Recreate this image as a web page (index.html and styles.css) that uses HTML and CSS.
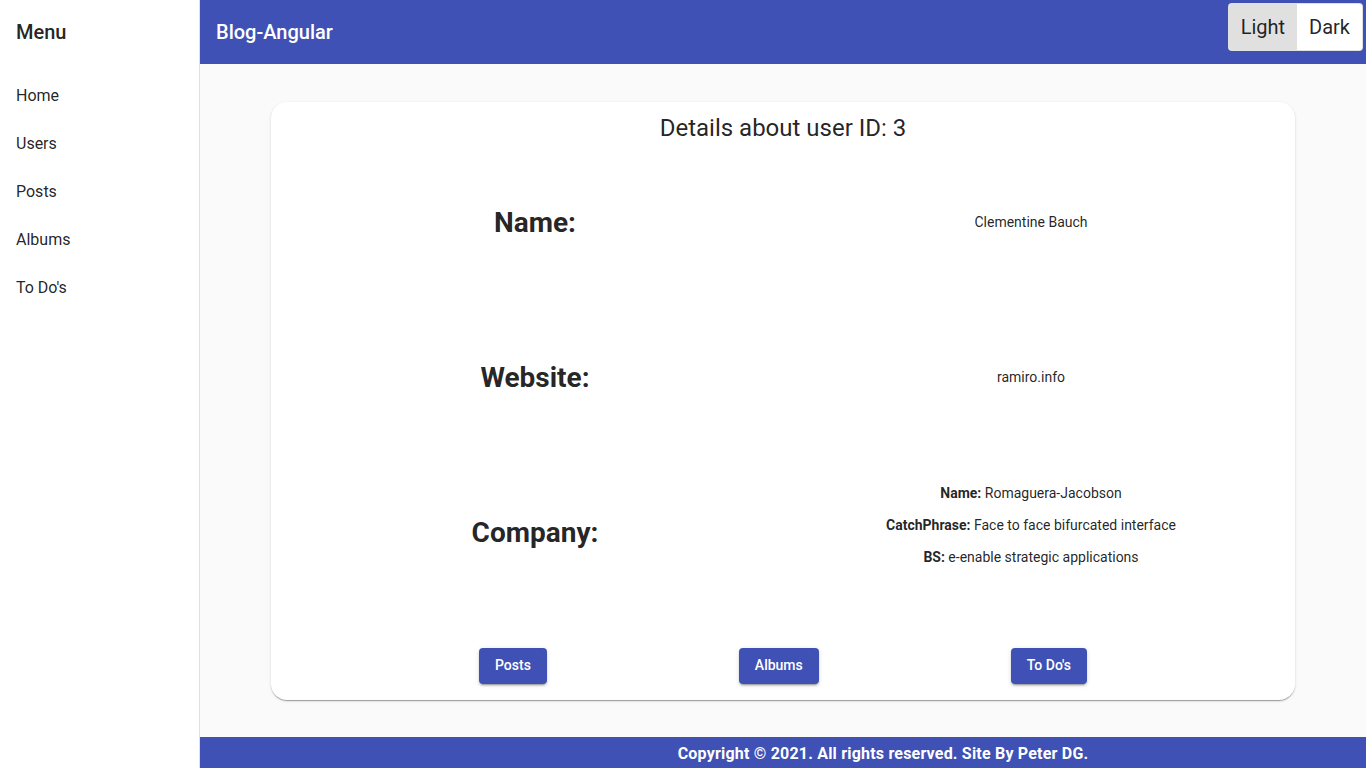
FILE: index.html
```html
<!DOCTYPE html>
<html lang="en">
<head>
<meta charset="utf-8">
<title>Blog-Angular</title>
<link rel="stylesheet" href="styles.css">
</head>
<body>
<div class="shell">
  <nav class="sidenav">
    <div class="sidenav-head">Menu</div>
    <ul class="nav-list">
      <li>Home</li>
      <li>Users</li>
      <li>Posts</li>
      <li>Albums</li>
      <li>To Do's</li>
    </ul>
  </nav>
  <div class="main">
    <header class="toolbar">
      <span class="brand">Blog-Angular</span>
      <div class="toggle-group">
        <span class="toggle checked">Light</span>
        <span class="toggle">Dark</span>
      </div>
    </header>
    <section class="content">
      <div class="card">
        <h1 class="card-title">Details about user ID: 3</h1>
        <div class="details">
          <div class="label">Name:</div>
          <div class="value">Clementine Bauch</div>
          <div class="label">Website:</div>
          <div class="value">ramiro.info</div>
          <div class="label">Company:</div>
          <div class="value company">
            <p><b>Name:</b> Romaguera-Jacobson</p>
            <p><b>CatchPhrase:</b> Face to face bifurcated interface</p>
            <p><b>BS:</b> e-enable strategic applications</p>
          </div>
        </div>
        <div class="actions">
          <button class="btn">Posts</button>
          <button class="btn">Albums</button>
          <button class="btn">To Do's</button>
        </div>
      </div>
    </section>
    <footer class="footer">Copyright © 2021. All rights reserved. Site By <span class="author">Peter DG.</span></footer>
  </div>
</div>
</body>
</html>
```
FILE: styles.css
```css
* { box-sizing: border-box; }
html, body { margin: 0; padding: 0; height: 100%; }
body {
  font-family: Roboto, "Helvetica Neue", sans-serif;
  color: rgba(0,0,0,.87);
  background: #fafafa;
}
.shell { display: flex; height: 768px; }
.sidenav {
  width: 200px;
  flex: 0 0 200px;
  background: #fff;
  border-right: 1px solid #e0e0e0;
}
.sidenav-head {
  height: 64px;
  display: flex;
  align-items: center;
  padding: 0 16px;
  font-size: 20px;
  font-weight: 500;
}
.nav-list { list-style: none; margin: 0; padding: 7px 0 0; }
.nav-list li {
  height: 48px;
  display: flex;
  align-items: center;
  padding: 0 16px;
  font-size: 16px;
  color: rgba(0,0,0,.87);
}
.main { flex: 1; display: flex; flex-direction: column; min-width: 0; }
.toolbar {
  height: 64px;
  flex: 0 0 64px;
  background: #3f51b5;
  color: #fff;
  display: flex;
  align-items: center;
  padding: 0 3px 0 16px;
}
.brand { font-size: 20px; font-weight: 500; }
.toggle-group {
  margin-left: auto;
  align-self: flex-start;
  margin-top: 3px;
  display: flex;
  height: 48px;
  border: 1px solid rgba(0,0,0,.12);
  border-radius: 4px;
  overflow: hidden;
  background: #fff;
}
.toggle {
  display: flex;
  align-items: center;
  padding: 0 12px;
  font-size: 20px;
  color: rgba(0,0,0,.87);
  background: #fff;
}
.toggle.checked { background: #e0e0e0; }
.content {
  flex: 1;
  display: flex;
  align-items: center;
  justify-content: center;
  padding: 0 71px;
}
.card {
  width: 1024px;
  background: #fff;
  border-radius: 16px;
  padding: 10px 16px 16px;
  box-shadow: 0 2px 1px -1px rgba(0,0,0,.2), 0 1px 1px 0 rgba(0,0,0,.14), 0 1px 3px 0 rgba(0,0,0,.12);
}
.card-title {
  margin: 0 0 2px;
  text-align: center;
  font-size: 24px;
  line-height: 32px;
  font-weight: 400;
}
.details {
  display: grid;
  grid-template-columns: 1fr 1fr;
  grid-auto-rows: 155px;
  align-items: center;
  justify-items: center;
}
.label { font-size: 28px; font-weight: 700; line-height: 32px; }
.value { font-size: 14px; line-height: 20px; text-align: center; margin-top: -2px; }
.company { margin-top: -4px; }
.company p { margin: 0 0 12px; }
.actions {
  margin-top: 37px;
  display: flex;
  justify-content: space-evenly;
}
.btn {
  font-family: Roboto, "Helvetica Neue", sans-serif;
  height: 36px;
  line-height: 35px;
  padding: 0 16px;
  border: none;
  border-radius: 4px;
  background: #3f51b5;
  color: #fff;
  font-size: 14px;
  font-weight: 500;
  box-shadow: 0 3px 1px -2px rgba(0,0,0,.2), 0 2px 2px 0 rgba(0,0,0,.14), 0 1px 5px 0 rgba(0,0,0,.12);
}
.footer {
  height: 31px;
  flex: 0 0 31px;
  background: #3f51b5;
  color: #fff;
  font-weight: 700;
  font-size: 16px;
  line-height: 33px;
  letter-spacing: 0.2px;
  text-align: center;
  padding-left: 200px;
  white-space: nowrap;
}
.author { font-weight: 700; }
```
